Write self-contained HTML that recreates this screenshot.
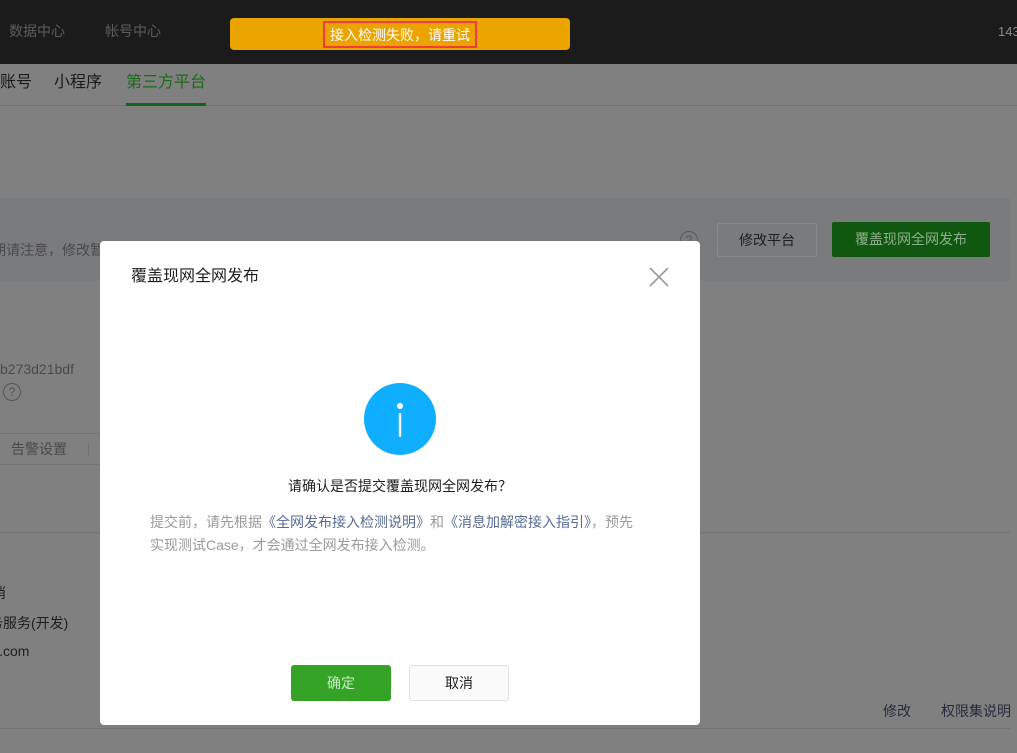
<!DOCTYPE html>
<html><head><meta charset="utf-8"><style>
*{margin:0;padding:0;box-sizing:border-box}
body{width:1017px;height:753px;overflow:hidden;background:#808080;position:relative;font-family:"Liberation Sans","Noto Sans CJK SC","WenQuanYi Zen Hei",sans-serif;font-size:14px}
.a{position:absolute;white-space:nowrap;line-height:1}
</style></head><body>
<div class="a" style="left:0;top:0;width:1017px;height:64px;background:#1b1b1b"></div>
<div class="a" style="left:9px;top:24px;color:#5c5c5c;font-size:14px">数据中心</div>
<div class="a" style="left:105px;top:24px;color:#5c5c5c;font-size:14px">帐号中心</div>
<div class="a" style="left:998px;top:25px;color:#8a8a8a;font-size:13px">143</div>
<div class="a" style="left:230px;top:18px;width:340px;height:32px;background:#eba300;border-radius:4px"></div>
<div class="a" style="left:323px;top:21px;width:154px;height:27px;border:2px solid #f03c3c;color:#fff;font-size:14px;padding:5px 0 0 5px">接入检测失败，请重试</div>

<div class="a" style="left:0;top:75px;color:#1a1a1a;font-size:16px">账号</div>
<div class="a" style="left:54px;top:75px;color:#1a1a1a;font-size:16px">小程序</div>
<div class="a" style="left:126px;top:75px;color:#1b6a1b;font-size:16px">第三方平台</div>
<div class="a" style="left:0;top:105px;width:1017px;height:1px;background:#727272"></div>
<div class="a" style="left:126px;top:103px;width:80px;height:3px;background:#15631a"></div>

<div class="a" style="left:0;top:198px;width:1010px;height:83px;background:#7a7b7d"></div>
<div class="a" style="left:-8px;top:243px;color:#4a4a4a;font-size:14px">期请注意，修改暂</div>
<div class="a" style="left:680px;top:231px;width:18px;height:18px;border:1px solid #5a5a5a;border-radius:50%;color:#5a5a5a;font-size:12px;text-align:center;line-height:16px">?</div>
<div class="a" style="left:717px;top:223px;width:100px;height:34px;border:1px solid #8a8a8a;border-radius:2px;color:#1e1e1e;font-size:14px;text-align:center;line-height:32px">修改平台</div>
<div class="a" style="left:832px;top:222px;width:158px;height:35px;background:#10570f;border-radius:2px;color:#8fae8e;font-size:14px;text-align:center;line-height:35px">覆盖现网全网发布</div>

<div class="a" style="left:0;top:362px;color:#4a4a4a;font-size:14px">b273d21bdf</div>
<div class="a" style="left:3px;top:383px;width:18px;height:18px;border:1px solid #555;border-radius:50%;color:#555;font-size:12px;text-align:center;line-height:16px">?</div>
<div class="a" style="left:0;top:433px;width:100px;height:1px;background:#727272"></div>
<div class="a" style="left:11px;top:442px;color:#4a4a4a;font-size:14px">告警设置</div>
<div class="a" style="left:88px;top:443px;width:1px;height:14px;background:#727272"></div>
<div class="a" style="left:0;top:464px;width:100px;height:1px;background:#727272"></div>
<div class="a" style="left:0;top:532px;width:1010px;height:1px;background:#727272"></div>
<div class="a" style="left:-8px;top:586px;color:#1e1e1e;font-size:14px">消</div>
<div class="a" style="left:-11px;top:616px;color:#1e1e1e;font-size:14px">务服务(开发)</div>
<div class="a" style="left:-4px;top:644px;color:#1e1e1e;font-size:14px">l.com</div>
<div class="a" style="left:883px;top:704px;color:#262c3c;font-size:14px">修改</div>
<div class="a" style="left:941px;top:704px;color:#262c3c;font-size:14px">权限集说明</div>
<div class="a" style="left:0;top:728px;width:1010px;height:1px;background:#727272"></div>

<div class="a" style="left:100px;top:241px;width:600px;height:484px;background:#fff;border-radius:4px"></div>
<div class="a" style="left:131px;top:269px;color:#1e1e1e;font-size:16px">覆盖现网全网发布</div>
<svg class="a" style="left:648px;top:266px" width="22" height="22"><path d="M2 2L20 20M20 2L2 20" stroke="#9a9a9a" stroke-width="1.6"/></svg>
<svg class="a" style="left:364px;top:383px" width="72" height="72"><circle cx="36" cy="36" r="36" fill="#10aeff"/><circle cx="36" cy="23" r="3" fill="#fff"/><rect x="34.8" y="30" width="2.4" height="24" rx="1.2" fill="#fff"/></svg>
<div class="a" style="left:100px;top:479px;width:600px;text-align:center;color:#1e1e1e;font-size:14px">请确认是否提交覆盖现网全网发布？</div>
<div class="a" style="left:150px;top:511px;color:#9a9a9a;font-size:14px;line-height:23px;white-space:normal;width:510px">提交前，请先根据<span style="color:#576b95">《全网发布接入检测说明》</span>和<span style="color:#576b95">《消息加解密接入指引》</span>，预先<br>实现测试Case，才会通过全网发布接入检测。</div>
<div class="a" style="left:291px;top:665px;width:100px;height:36px;background:#35a325;border-radius:3px;color:#c8eec4;font-size:14px;text-align:center;line-height:36px">确定</div>
<div class="a" style="left:409px;top:665px;width:100px;height:36px;background:#fafafa;border:1px solid #e2e2e2;border-radius:3px;color:#1e1e1e;font-size:14px;text-align:center;line-height:34px">取消</div>
</body></html>
